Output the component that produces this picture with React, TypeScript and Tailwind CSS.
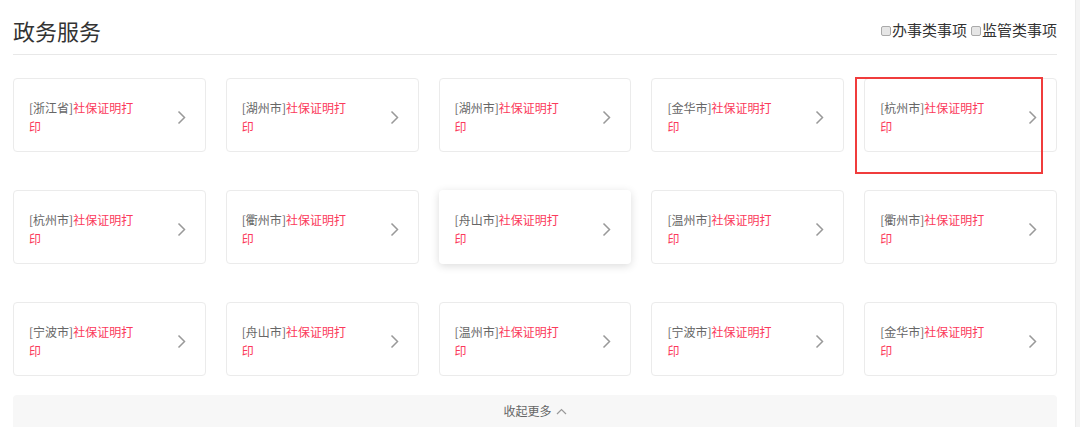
import React from "react";

const items: string[][] = [
  ["浙江省", "湖州市", "湖州市", "金华市", "杭州市"],
  ["杭州市", "衢州市", "舟山市", "温州市", "衢州市"],
  ["宁波市", "舟山市", "温州市", "宁波市", "金华市"],
];

function Chevron({ up = false }: { up?: boolean }) {
  if (up) {
    return (
      <svg width="11" height="7" viewBox="0 0 11 7" className="inline-block">
        <polyline points="1,6 5.5,1.5 10,6" fill="none" stroke="#999" strokeWidth="1.2" />
      </svg>
    );
  }
  return (
    <svg width="9" height="15" viewBox="0 0 9 15">
      <polyline points="1.5,1.5 7.5,7.5 1.5,13.5" fill="none" stroke="#999" strokeWidth="1.5" />
    </svg>
  );
}

function Card({ city, hover, marked }: { city: string; hover?: boolean; marked?: boolean }) {
  return (
    <div
      className={
        "relative h-[74px] rounded-[4px] bg-white flex items-center justify-between pl-[15px] pr-[19px] pt-[4px] " +
        (hover
          ? "border border-transparent shadow-[0_2px_8px_rgba(0,0,0,0.14)]"
          : "border border-[#ebebeb]")
      }
    >
      <div className="w-[112px] text-[12px] leading-[19px] text-[#fb3a5b]">
        <span className="text-[#666]">[{city}]</span>社保证明打印
      </div>
      <Chevron />
      {marked && (
        <div className="absolute left-[-10px] top-[-2px] w-[188px] h-[97px] border-2 border-[#f03c3c] pointer-events-none" />
      )}
    </div>
  );
}

export default function App() {
  return (
    <div
      className="flex w-[1080px] h-[427px] overflow-hidden bg-white"
      style={{ fontFamily: '"Noto Sans CJK SC", "Noto Sans", sans-serif' }}
    >
      <div className="w-[1075px] px-[13px] shrink-0">
        <div className="h-[55px] pt-[7px] flex items-center justify-between border-b border-[#e8e8e8] mr-[5px]">
          <div className="text-[22px] text-[#333]">政务服务</div>
          <div className="flex items-center text-[15px] text-[#333]">
            <span className="inline-block w-[10px] h-[10px] border border-[#aaa] bg-[#e6e6e6] rounded-[2px] mr-[1px]" />
            <span>办事类事项</span>
            <span className="inline-block w-[10px] h-[10px] border border-[#aaa] bg-[#e6e6e6] rounded-[2px] ml-[4px] mr-[1px]" />
            <span>监管类事项</span>
          </div>
        </div>
        <div className="mt-[23px] mr-[5px] grid grid-cols-5 gap-x-[20px] gap-y-[38px]">
          {items.map((row, r) =>
            row.map((city, c) => (
              <Card
                key={r + "-" + c}
                city={city}
                hover={r === 1 && c === 2}
                marked={r === 0 && c === 4}
              />
            ))
          )}
        </div>
        <div className="mt-[19px] mr-[5px] h-[40px] rounded-t-[4px] bg-[#f7f7f7] flex justify-center pt-[7px] text-[12px] text-[#666]">
          <span className="flex items-center gap-[4px] h-[18px]">
            收起更多
            <Chevron up />
          </span>
        </div>
      </div>
      <div className="flex-1 bg-[#f4f4f4] border-l border-[#ececec]" />
    </div>
  );
}
